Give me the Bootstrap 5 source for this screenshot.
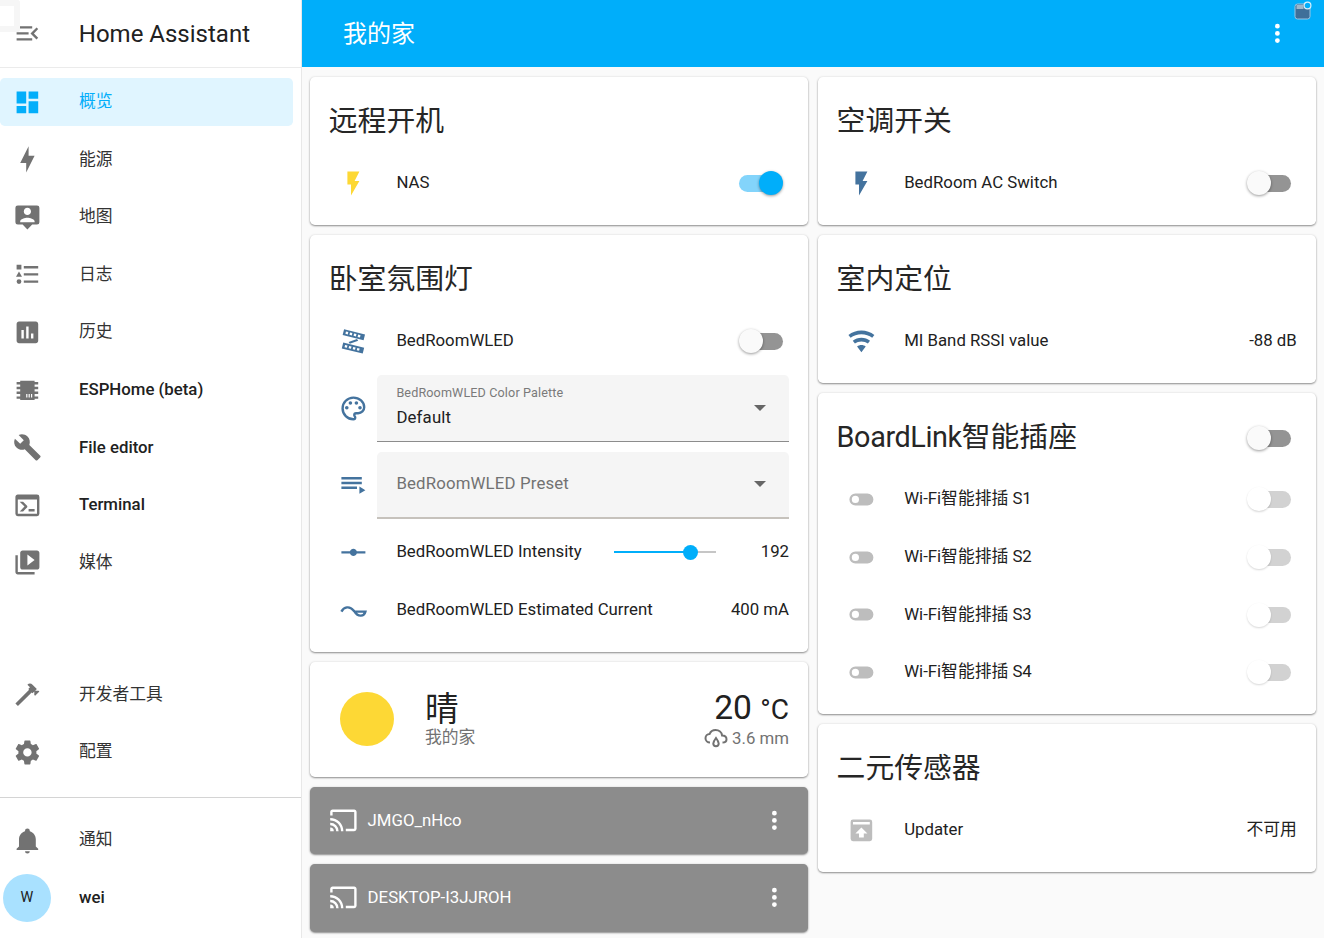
<!DOCTYPE html>
<html lang="zh-CN">
<head>
<meta charset="UTF-8">
<title>我的家 - Home Assistant</title>
<link href="https://cdn.jsdelivr.net/npm/bootstrap@5.3.0/dist/css/bootstrap.min.css" rel="stylesheet">
<style>
html, body { height: 938px; overflow: hidden; }
body { background: #fafafa; color: #212121; font-family: Roboto, "Noto Sans CJK SC", sans-serif; font-size: 16.8px; line-height: 1.3; }
svg { fill: currentColor; flex: none; display: block; }
.ic { width: 28.8px; height: 28.8px; }
.ic-row { color: #44739e; }
.ic-off { color: #bdbdbd; }
.shell { height: 938px; }
.side { width: 302px; flex: none; background: #fff; border-right: 1px solid #e8e8e8; position: relative; }
.side-head { height: 68px; border-bottom: 1px solid #ebebeb; padding-left: 12.6px; }
.side-title { font-size: 24px; margin-left: 37.4px; padding-top: 2px; color: #212121; }
.side-group { padding-top: 10px; gap: 9.6px; }
.side-item { height: 48px; padding-left: 12.6px; width: 293px; border-radius: 4.8px; color: #727272; }
.side-item span { margin-left: 37.6px; color: #212121; font-weight: 500; }
.side-item span.cjk { font-weight: 400; color: #333; }
.side-item.active { background: #e0f5ff; color: #03aefa; }
.side-item.active span { color: #03aefa; }
.side-tools { padding-bottom: 21px; }
.side-foot { border-top: 1px solid #d4d4d4; padding-top: 18px; padding-bottom: 16px; gap: 9.6px; }
.avatar { width: 48px; height: 48px; border-radius: 50%; background: #a9e1ff; margin-left: -9.6px; font-size: 14.4px; color: #212121; }
.avatar + span { margin-left: 28px !important; }
.ghost { position: absolute; left: 0; top: 0; width: 20px; height: 32px; border: 6px solid #f6f6f6; border-left: 0; border-radius: 0 3px 3px 0; }
.top-bar { height: 67px; background: #00aefa; padding: 0 32.6px 0 41px; position: relative; }
.top-title { font-size: 24px; color: #fff; padding-top: 2px; }
.tray-icon { position: absolute; right: 10px; top: 1px; width: 20px; height: 20px; }
.board { padding: 9.6px 8px 0; gap: 9.6px; }
.board-col { width: calc(50% - 4.8px); gap: 9.6px; }
.tile { border: 0; border-radius: 4.8px; background: #fff; box-shadow: 0 1px 2px rgba(0,0,0,.42), 0 0 3px rgba(0,0,0,.08); }
.tile-head { height: 82.4px; padding: 20px 25px 0 18.8px; font-size: 28.8px; line-height: 48px; color: #262626; }
.tile-head b { font-weight: 400; letter-spacing: -.4px; }
.rows { padding: 0 19.2px 18.2px; gap: 9.6px; }
.line { height: 48px; }
.line-ic { width: 48px; flex: none; }
.line-name { margin-left: 19.2px; color: #212121; white-space: nowrap; }
.line-val { margin-left: auto; white-space: nowrap; }
.swi { width: 44px; height: 24px; margin-left: auto; margin-right: 6px; position: relative; flex: none; }
.swi::before { content: ""; position: absolute; left: 2px; right: 0; top: 4px; height: 16.8px; border-radius: 9px; background: #949494; }
.swi::after { content: ""; position: absolute; left: 0; top: 0; width: 24px; height: 24px; border-radius: 50%; background: #fafafa; box-shadow: 0 1px 3px rgba(0,0,0,.4); }
.swi.on::before { background: #83d4fb; right: 2px; left: 0; }
.swi.on::after { left: 20px; background: #00aefa; }
.swi.dis::before { background: #d2d2d2; }
.swi.dis::after { background: #fff; box-shadow: 0 1px 2px rgba(0,0,0,.16); }
.pick { height: 67.2px; flex: 1; background: #f5f5f5; border-bottom: 1px solid #8c8c8c; border-radius: 4.8px 4.8px 0 0; padding: 0 19.2px; letter-spacing: .16px; }
.pick.muted { border-bottom: 2px solid #c6c2bc; color: #727272; }
.pick small { display: block; font-size: 12.6px; color: #7a7a7a; line-height: 1; margin-bottom: 7px; letter-spacing: .13px; }
.pick-arrow { margin-left: auto; margin-right: 4px; border-left: 6px solid transparent; border-right: 6px solid transparent; border-top: 6px solid #666; }
.range-wrap { width: 102px; height: 15px; margin-left: 32px; position: relative; }
.range-track { position: absolute; left: 0; right: 0; top: 6.5px; height: 2px; background: #c6c6c6; }
.range-fill { position: absolute; left: 0; top: 6.5px; height: 2px; background: #00aefa; }
.range-dot { position: absolute; top: 0; width: 15px; height: 15px; border-radius: 50%; background: #00aefa; margin-left: -7.5px; }
.sky { height: 115.6px; padding: 0 19.2px 0 30px; }
.sun { width: 54px; height: 54px; border-radius: 50%; background: #fdd835; flex: none; }
.sky-main { margin-left: 31px; }
.sky-cond { font-size: 33.6px; line-height: 35px; }
.sky-sub { color: #727272; line-height: 20px; }
.sky-temp { font-size: 33.6px; line-height: 38px; text-align: right; }
.sky-temp sup { font-size: 28px; top: 0; vertical-align: baseline; }
.sky-rain { color: #727272; line-height: 20px; margin-top: -1px; gap: 4px; }
.cast { height: 67.6px; background: #8c8c8c; color: #fff; padding: 0 19.2px; }
.cast-name { margin-left: 9.6px; }
.cast-dots { margin-left: auto; margin-right: 0; }
</style>
</head>
<body>
<div class="shell d-flex">
  <aside class="side d-flex flex-column">
    <div class="ghost"></div>
    <div class="side-head d-flex align-items-center">
      <svg class="ic" style="color:#727272" viewBox="0 0 24 24"><path d="M21,15.61L19.59,17L14.58,12L19.59,7L21,8.39L17.44,12L21,15.61M3,6H16V8H3V6M3,13V11H13V13H3M3,18V16H16V18H3Z"/></svg>
      <div class="side-title">Home Assistant</div>
    </div>
    <nav class="side-group d-flex flex-column">
      <div class="side-item active d-flex align-items-center"><svg class="ic" viewBox="0 0 24 24"><path d="M13,3V9H21V3M13,21H21V11H13M3,21H11V15H3M3,13H11V3H3V13Z"/></svg><span class="cjk">概览</span></div>
      <div class="side-item d-flex align-items-center"><svg class="ic" viewBox="0 0 24 24"><path d="M11 15H6L13 1V9H18L11 23V15Z"/></svg><span class="cjk">能源</span></div>
      <div class="side-item d-flex align-items-center"><svg class="ic" viewBox="0 0 24 24"><path fill-rule="evenodd" d="M4,2H20A2,2 0 0,1 22,4V16A2,2 0 0,1 20,18H16L12,22L8,18H4A2,2 0 0,1 2,16V4A2,2 0 0,1 4,2M12,4C10.34,4 9,5.34 9,7C9,8.66 10.34,10 12,10C13.66,10 15,8.66 15,7C15,5.34 13.66,4 12,4M6,16H18V15.25C18,13.25 14,12.2 12,12.2C10,12.2 6,13.25 6,15.25V16Z"/></svg><span class="cjk">地图</span></div>
      <div class="side-item d-flex align-items-center"><svg class="ic" viewBox="0 0 24 24"><path d="M5,9.5L7.5,14H2.5L5,9.5M3,4H7V8H3V4M5,20A2,2 0 0,0 7,18A2,2 0 0,0 5,16A2,2 0 0,0 3,18A2,2 0 0,0 5,20M9,5V7H21V5H9M9,19H21V17H9V19M9,13H21V11H9V13Z"/></svg><span class="cjk">日志</span></div>
      <div class="side-item d-flex align-items-center"><svg class="ic" viewBox="0 0 24 24"><path d="M19,3H5C3.9,3 3,3.9 3,5V19C3,20.1 3.9,21 5,21H19C20.1,21 21,20.1 21,19V5C21,3.9 20.1,3 19,3M9,17H7V10H9V17M13,17H11V7H13V17M17,17H15V13H17V17Z"/></svg><span class="cjk">历史</span></div>
      <div class="side-item d-flex align-items-center"><svg class="ic" viewBox="0 0 24 24"><path d="M6,4H18V5H21V7H18V9H21V11H18V13H21V15H18V17H21V19H18V20H6V19H3V17H6V15H3V13H6V11H3V9H6V7H3V5H6V4M11,15V18H12V15H11M13,15V18H14V15H13M15,15V18H16V15H15Z"/></svg><span>ESPHome (beta)</span></div>
      <div class="side-item d-flex align-items-center"><svg class="ic" viewBox="0 0 24 24"><path d="M22.7,19L13.6,9.9C14.5,7.6 14,4.9 12.1,3C10.1,1 7.1,0.6 4.7,1.7L9,6L6,9L1.6,4.7C0.4,7.1 0.9,10.1 2.9,12.1C4.8,14 7.5,14.5 9.8,13.6L18.9,22.7C19.3,23.1 19.9,23.1 20.3,22.7L22.6,20.4C23.1,20 23.1,19.3 22.7,19Z"/></svg><span>File editor</span></div>
      <div class="side-item d-flex align-items-center"><svg class="ic" viewBox="0 0 24 24"><path d="M20,19V7H4V19H20M20,3A2,2 0 0,1 22,5V19A2,2 0 0,1 20,21H4A2,2 0 0,1 2,19V5C2,3.89 2.9,3 4,3H20M13,17V15H18V17H13M9.58,13L5.57,9H8.4L11.7,12.3C12.09,12.69 12.09,13.33 11.7,13.72L8.42,17H5.59L9.58,13Z"/></svg><span>Terminal</span></div>
      <div class="side-item d-flex align-items-center"><svg class="ic" viewBox="0 0 24 24"><path d="M4 6H2V20C2 21.1 2.9 22 4 22H18V20H4V6M20 2H8C6.9 2 6 2.9 6 4V16C6 17.1 6.9 18 8 18H20C21.1 18 22 17.1 22 16V4C22 2.9 21.1 2 20 2M12 14.5V5.5L18 10L12 14.5Z"/></svg><span class="cjk">媒体</span></div>
    </nav>
    <div class="side-group side-tools d-flex flex-column mt-auto">
      <div class="side-item d-flex align-items-center"><svg class="ic" viewBox="0 0 24 24"><path d="M2 19.63L13.43 8.2L12.72 7.5L14.14 6.07L12 3.89C13.2 2.7 15.09 2.7 16.27 3.89L19.87 7.5L18.45 8.91H21.29L22 9.62L18.45 13.21L17.74 12.5V9.62L16.27 11.04L15.56 10.33L4.13 21.76L2 19.63Z"/></svg><span class="cjk">开发者工具</span></div>
      <div class="side-item d-flex align-items-center"><svg class="ic" viewBox="0 0 24 24"><path d="M12,15.5A3.5,3.5 0 0,1 8.5,12A3.5,3.5 0 0,1 12,8.5A3.5,3.5 0 0,1 15.5,12A3.5,3.5 0 0,1 12,15.5M19.43,12.97C19.47,12.65 19.5,12.33 19.5,12C19.5,11.67 19.47,11.34 19.43,11L21.54,9.37C21.73,9.22 21.78,8.95 21.66,8.73L19.66,5.27C19.54,5.05 19.27,4.96 19.05,5.05L16.56,6.05C16.04,5.66 15.5,5.32 14.87,5.07L14.5,2.42C14.46,2.18 14.25,2 14,2H10C9.75,2 9.54,2.18 9.5,2.42L9.13,5.07C8.5,5.32 7.96,5.66 7.44,6.05L4.95,5.05C4.73,4.96 4.46,5.05 4.34,5.27L2.34,8.73C2.21,8.95 2.27,9.22 2.46,9.37L4.57,11C4.53,11.34 4.5,11.67 4.5,12C4.5,12.33 4.53,12.65 4.57,12.97L2.46,14.63C2.27,14.78 2.21,15.05 2.34,15.27L4.34,18.73C4.46,18.95 4.73,19.03 4.95,18.95L7.44,17.94C7.96,18.34 8.5,18.68 9.13,18.93L9.5,21.58C9.54,21.82 9.75,22 10,22H14C14.25,22 14.46,21.82 14.5,21.58L14.87,18.93C15.5,18.67 16.04,18.34 16.56,17.94L19.05,18.95C19.27,19.03 19.54,18.95 19.66,18.73L21.66,15.27C21.78,15.05 21.73,14.78 21.54,14.63L19.43,12.97Z"/></svg><span class="cjk">配置</span></div>
    </div>
    <div class="side-foot d-flex flex-column">
      <div class="side-item d-flex align-items-center"><svg class="ic" viewBox="0 0 24 24"><path d="M21,19V20H3V19L5,17V11C5,7.9 7.03,5.17 10,4.29C10,4.19 10,4.1 10,4A2,2 0 0,1 12,2A2,2 0 0,1 14,4C14,4.1 14,4.19 14,4.29C16.97,5.17 19,7.9 19,11V17L21,19M14,21A2,2 0 0,1 12,23A2,2 0 0,1 10,21"/></svg><span class="cjk">通知</span></div>
      <div class="side-item d-flex align-items-center"><div class="avatar d-flex align-items-center justify-content-center flex-none">W</div><span>wei</span></div>
    </div>
  </aside>

  <main class="flex-fill d-flex flex-column" style="min-width:0">
    <header class="top-bar d-flex align-items-center">
      <div class="top-title">我的家</div>
      <svg class="ic ms-auto" style="color:#fff" viewBox="0 0 24 24"><path d="M12,16A2,2 0 0,1 14,18A2,2 0 0,1 12,20A2,2 0 0,1 10,18A2,2 0 0,1 12,16M12,10A2,2 0 0,1 14,12A2,2 0 0,1 12,14A2,2 0 0,1 10,12A2,2 0 0,1 12,10M12,4A2,2 0 0,1 14,6A2,2 0 0,1 12,8A2,2 0 0,1 10,6A2,2 0 0,1 12,4Z"/></svg>
      <svg class="tray-icon" viewBox="0 0 20 20"><rect x="1" y="3" width="15" height="15" rx="2.5" fill="#3f6f99" stroke="#9cc4e0"/><rect x="2.5" y="4" width="7" height="4" fill="#9cb8cc"/><circle cx="13.5" cy="4.5" r="3.4" fill="#00aefa" stroke="#d9f0fb" stroke-width="1.2"/></svg>
    </header>

    <div class="board d-flex align-items-start">
      <div class="board-col d-flex flex-column">
        <section class="card tile">
          <div class="tile-head">远程开机</div>
          <div class="rows d-flex flex-column">
            <div class="line d-flex align-items-center">
              <div class="line-ic d-flex justify-content-center"><svg class="ic" style="color:#fdd835" viewBox="0 0 24 24"><path d="M7,2V13H10V22L17,10H13L17,2H7Z"/></svg></div>
              <div class="line-name">NAS</div>
              <div class="swi on"></div>
            </div>
          </div>
        </section>

        <section class="card tile">
          <div class="tile-head">卧室氛围灯</div>
          <div class="rows d-flex flex-column">
            <div class="line d-flex align-items-center">
              <div class="line-ic d-flex justify-content-center"><svg class="ic ic-row" viewBox="0 0 24 24"><g transform="rotate(14 12 12)"><path fill-rule="evenodd" d="M2,4H20V9H2V4M4,5.5V7.5H6V5.5H4M7.5,5.5V7.5H9.5V5.5H7.5M11,5.5V7.5H13V5.5H11M14.5,5.5V7.5H16.5V5.5H14.5M4,15H22V20H4V15M6,16.5V18.5H8V16.5H6M9.5,16.5V18.5H11.5V16.5H9.5M13,16.5V18.5H15V16.5H13M16.5,16.5V18.5H18.5V16.5H16.5Z"/></g><path d="M8,12.5L15,10L16,11.5L9,14Z"/></svg></div>
              <div class="line-name">BedRoomWLED</div>
              <div class="swi"></div>
            </div>
            <div class="d-flex align-items-center">
              <div class="line-ic d-flex justify-content-center"><svg class="ic ic-row" viewBox="0 0 24 24"><path fill="none" stroke="currentColor" stroke-width="2" d="M12,3A9,9 0 0,0 3,12A9,9 0 0,0 12,21A1.5,1.5 0 0,0 13.5,19.5C13.5,19.11 13.35,18.76 13.11,18.5C12.88,18.23 12.73,17.88 12.73,17.5A1.5,1.5 0 0,1 14.23,16H16A5,5 0 0,0 21,11C21,6.58 16.97,3 12,3Z"/><circle cx="6.5" cy="11.5" r="1.5"/><circle cx="9.5" cy="7.5" r="1.5"/><circle cx="14.5" cy="7.5" r="1.5"/><circle cx="17.5" cy="11.5" r="1.5"/></svg></div>
              <div class="pick d-flex align-items-center">
                <div><small>BedRoomWLED Color Palette</small>Default</div>
                <div class="pick-arrow"></div>
              </div>
            </div>
            <div class="d-flex align-items-center">
              <div class="line-ic d-flex justify-content-center"><svg class="ic ic-row" viewBox="0 0 24 24"><path d="M19,9H2V11H19V9M19,5H2V7H19V5M2,15H15V13H2V15M17,13V19L22,16L17,13Z"/></svg></div>
              <div class="pick muted d-flex align-items-center">
                <div>BedRoomWLED Preset</div>
                <div class="pick-arrow"></div>
              </div>
            </div>
            <div class="line d-flex align-items-center">
              <div class="line-ic d-flex justify-content-center"><svg class="ic ic-row" viewBox="0 0 24 24"><path d="M2 11H9.17C9.58 9.83 10.69 9 12 9S14.42 9.83 14.83 11H22V13H14.83C14.42 14.17 13.31 15 12 15S9.58 14.17 9.17 13H2V11Z"/></svg></div>
              <div class="line-name">BedRoomWLED Intensity</div>
              <div class="range-wrap">
                <div class="range-track"></div>
                <div class="range-fill" style="width:75%"></div>
                <div class="range-dot" style="left:75%"></div>
              </div>
              <div class="line-val">192</div>
            </div>
            <div class="line d-flex align-items-center">
              <div class="line-ic d-flex justify-content-center"><svg class="ic ic-row" viewBox="0 0 24 24"><path fill="none" stroke="currentColor" stroke-width="2" d="M2,13C4,9 9,8 12,12L13,13H22C21,17 16,18 13,13"/></svg></div>
              <div class="line-name">BedRoomWLED Estimated Current</div>
              <div class="line-val">400 mA</div>
            </div>
          </div>
        </section>

        <section class="card tile sky d-flex flex-row align-items-center">
          <div class="sun"></div>
          <div class="sky-main">
            <div class="sky-cond">晴</div>
            <div class="sky-sub">我的家</div>
          </div>
          <div class="ms-auto">
            <div class="sky-temp">20 <sup>°C</sup></div>
            <div class="sky-rain d-flex align-items-center justify-content-end">
              <svg style="width:24px;height:24px" viewBox="0 0 24 24"><path fill="none" stroke="currentColor" stroke-width="2" d="M6,16.5C3.5,16.5 1.5,14.6 1.5,12.2C1.5,9.9 3.3,8 5.6,8C6.5,5.6 8.9,4 11.6,4C15,4 17.7,6.4 18.1,9.5C20.6,9.5 22.5,11 22.5,13.2C22.5,15.2 20.8,16.5 18.5,16.5"/><path fill="none" stroke="currentColor" stroke-width="2" d="M12,12C10.5,14 9.3,15.8 9.3,17.6A2.7,2.7 0 0,0 14.7,17.6C14.7,15.8 13.5,14 12,12Z"/></svg>
              <span>3.6 mm</span>
            </div>
          </div>
        </section>

        <section class="card tile cast d-flex flex-row align-items-center">
          <svg class="ic" viewBox="0 0 24 24"><path d="M1,10V12A9,9 0 0,1 10,21H12C12,14.92 7.07,10 1,10M1,14V16A5,5 0 0,1 6,21H8A7,7 0 0,0 1,14M1,18V21H4A3,3 0 0,0 1,18M21,3H3C1.89,3 1,3.89 1,5V8H3V5H21V19H14V21H21A2,2 0 0,0 23,19V5C23,3.89 22.1,3 21,3Z"/></svg>
          <div class="cast-name">JMGO_nHco</div>
          <svg class="ic cast-dots" viewBox="0 0 24 24"><path d="M12,16A2,2 0 0,1 14,18A2,2 0 0,1 12,20A2,2 0 0,1 10,18A2,2 0 0,1 12,16M12,10A2,2 0 0,1 14,12A2,2 0 0,1 12,14A2,2 0 0,1 10,12A2,2 0 0,1 12,10M12,4A2,2 0 0,1 14,6A2,2 0 0,1 12,8A2,2 0 0,1 10,6A2,2 0 0,1 12,4Z"/></svg>
        </section>

        <section class="card tile cast d-flex flex-row align-items-center">
          <svg class="ic" viewBox="0 0 24 24"><path d="M1,10V12A9,9 0 0,1 10,21H12C12,14.92 7.07,10 1,10M1,14V16A5,5 0 0,1 6,21H8A7,7 0 0,0 1,14M1,18V21H4A3,3 0 0,0 1,18M21,3H3C1.89,3 1,3.89 1,5V8H3V5H21V19H14V21H21A2,2 0 0,0 23,19V5C23,3.89 22.1,3 21,3Z"/></svg>
          <div class="cast-name">DESKTOP-I3JJROH</div>
          <svg class="ic cast-dots" viewBox="0 0 24 24"><path d="M12,16A2,2 0 0,1 14,18A2,2 0 0,1 12,20A2,2 0 0,1 10,18A2,2 0 0,1 12,16M12,10A2,2 0 0,1 14,12A2,2 0 0,1 12,14A2,2 0 0,1 10,12A2,2 0 0,1 12,10M12,4A2,2 0 0,1 14,6A2,2 0 0,1 12,8A2,2 0 0,1 10,6A2,2 0 0,1 12,4Z"/></svg>
        </section>
      </div>

      <div class="board-col d-flex flex-column">
        <section class="card tile">
          <div class="tile-head">空调开关</div>
          <div class="rows d-flex flex-column">
            <div class="line d-flex align-items-center">
              <div class="line-ic d-flex justify-content-center"><svg class="ic ic-row" viewBox="0 0 24 24"><path d="M7,2V13H10V22L17,10H13L17,2H7Z"/></svg></div>
              <div class="line-name">BedRoom AC Switch</div>
              <div class="swi"></div>
            </div>
          </div>
        </section>

        <section class="card tile">
          <div class="tile-head">室内定位</div>
          <div class="rows d-flex flex-column">
            <div class="line d-flex align-items-center">
              <div class="line-ic d-flex justify-content-center"><svg class="ic ic-row" viewBox="0 0 24 24"><path d="M12,21L15.6,16.2C14.6,15.45 13.35,15 12,15C10.65,15 9.4,15.45 8.4,16.2L12,21M12,3C7.95,3 4.21,4.34 1.2,6.6L3,9C5.5,7.12 8.62,6 12,6C15.38,6 18.5,7.12 21,9L22.8,6.6C19.79,4.34 16.05,3 12,3M12,9C9.3,9 6.81,9.89 4.8,11.4L6.6,13.8C8.1,12.67 9.97,12 12,12C14.03,12 15.9,12.67 17.4,13.8L19.2,11.4C17.19,9.89 14.7,9 12,9Z"/></svg></div>
              <div class="line-name">MI Band RSSI value</div>
              <div class="line-val">-88 dB</div>
            </div>
          </div>
        </section>

        <section class="card tile">
          <div class="tile-head d-flex"><span><b>BoardLink</b>智能插座</span><div class="swi" style="margin-top:13px;margin-right:0"></div></div>
          <div class="rows d-flex flex-column">
            <div class="line d-flex align-items-center">
              <div class="line-ic d-flex justify-content-center"><svg class="ic ic-off" viewBox="0 0 24 24"><path d="M17,7H7A5,5 0 0,0 2,12A5,5 0 0,0 7,17H17A5,5 0 0,0 22,12A5,5 0 0,0 17,7M7,15A3,3 0 0,1 4,12A3,3 0 0,1 7,9A3,3 0 0,1 10,12A3,3 0 0,1 7,15Z"/></svg></div>
              <div class="line-name">Wi-Fi智能排插 S1</div>
              <div class="swi dis"></div>
            </div>
            <div class="line d-flex align-items-center">
              <div class="line-ic d-flex justify-content-center"><svg class="ic ic-off" viewBox="0 0 24 24"><path d="M17,7H7A5,5 0 0,0 2,12A5,5 0 0,0 7,17H17A5,5 0 0,0 22,12A5,5 0 0,0 17,7M7,15A3,3 0 0,1 4,12A3,3 0 0,1 7,9A3,3 0 0,1 10,12A3,3 0 0,1 7,15Z"/></svg></div>
              <div class="line-name">Wi-Fi智能排插 S2</div>
              <div class="swi dis"></div>
            </div>
            <div class="line d-flex align-items-center">
              <div class="line-ic d-flex justify-content-center"><svg class="ic ic-off" viewBox="0 0 24 24"><path d="M17,7H7A5,5 0 0,0 2,12A5,5 0 0,0 7,17H17A5,5 0 0,0 22,12A5,5 0 0,0 17,7M7,15A3,3 0 0,1 4,12A3,3 0 0,1 7,9A3,3 0 0,1 10,12A3,3 0 0,1 7,15Z"/></svg></div>
              <div class="line-name">Wi-Fi智能排插 S3</div>
              <div class="swi dis"></div>
            </div>
            <div class="line d-flex align-items-center">
              <div class="line-ic d-flex justify-content-center"><svg class="ic ic-off" viewBox="0 0 24 24"><path d="M17,7H7A5,5 0 0,0 2,12A5,5 0 0,0 7,17H17A5,5 0 0,0 22,12A5,5 0 0,0 17,7M7,15A3,3 0 0,1 4,12A3,3 0 0,1 7,9A3,3 0 0,1 10,12A3,3 0 0,1 7,15Z"/></svg></div>
              <div class="line-name">Wi-Fi智能排插 S4</div>
              <div class="swi dis"></div>
            </div>
          </div>
        </section>

        <section class="card tile">
          <div class="tile-head">二元传感器</div>
          <div class="rows d-flex flex-column">
            <div class="line d-flex align-items-center">
              <div class="line-ic d-flex justify-content-center"><svg class="ic ic-off" viewBox="0 0 24 24"><path fill-rule="evenodd" d="M5,3H19A2,2 0 0,1 21,5V19A2,2 0 0,1 19,21H5A2,2 0 0,1 3,19V5A2,2 0 0,1 5,3M5,5V7H19V5H5M12,9.5L7,14.5H10V18H14V14.5H17L12,9.5Z"/></svg></div>
              <div class="line-name">Updater</div>
              <div class="line-val">不可用</div>
            </div>
          </div>
        </section>
      </div>
    </div>
  </main>
</div>
<script src="https://cdn.jsdelivr.net/npm/bootstrap@5.3.0/dist/js/bootstrap.bundle.min.js"></script>
</body>
</html>
